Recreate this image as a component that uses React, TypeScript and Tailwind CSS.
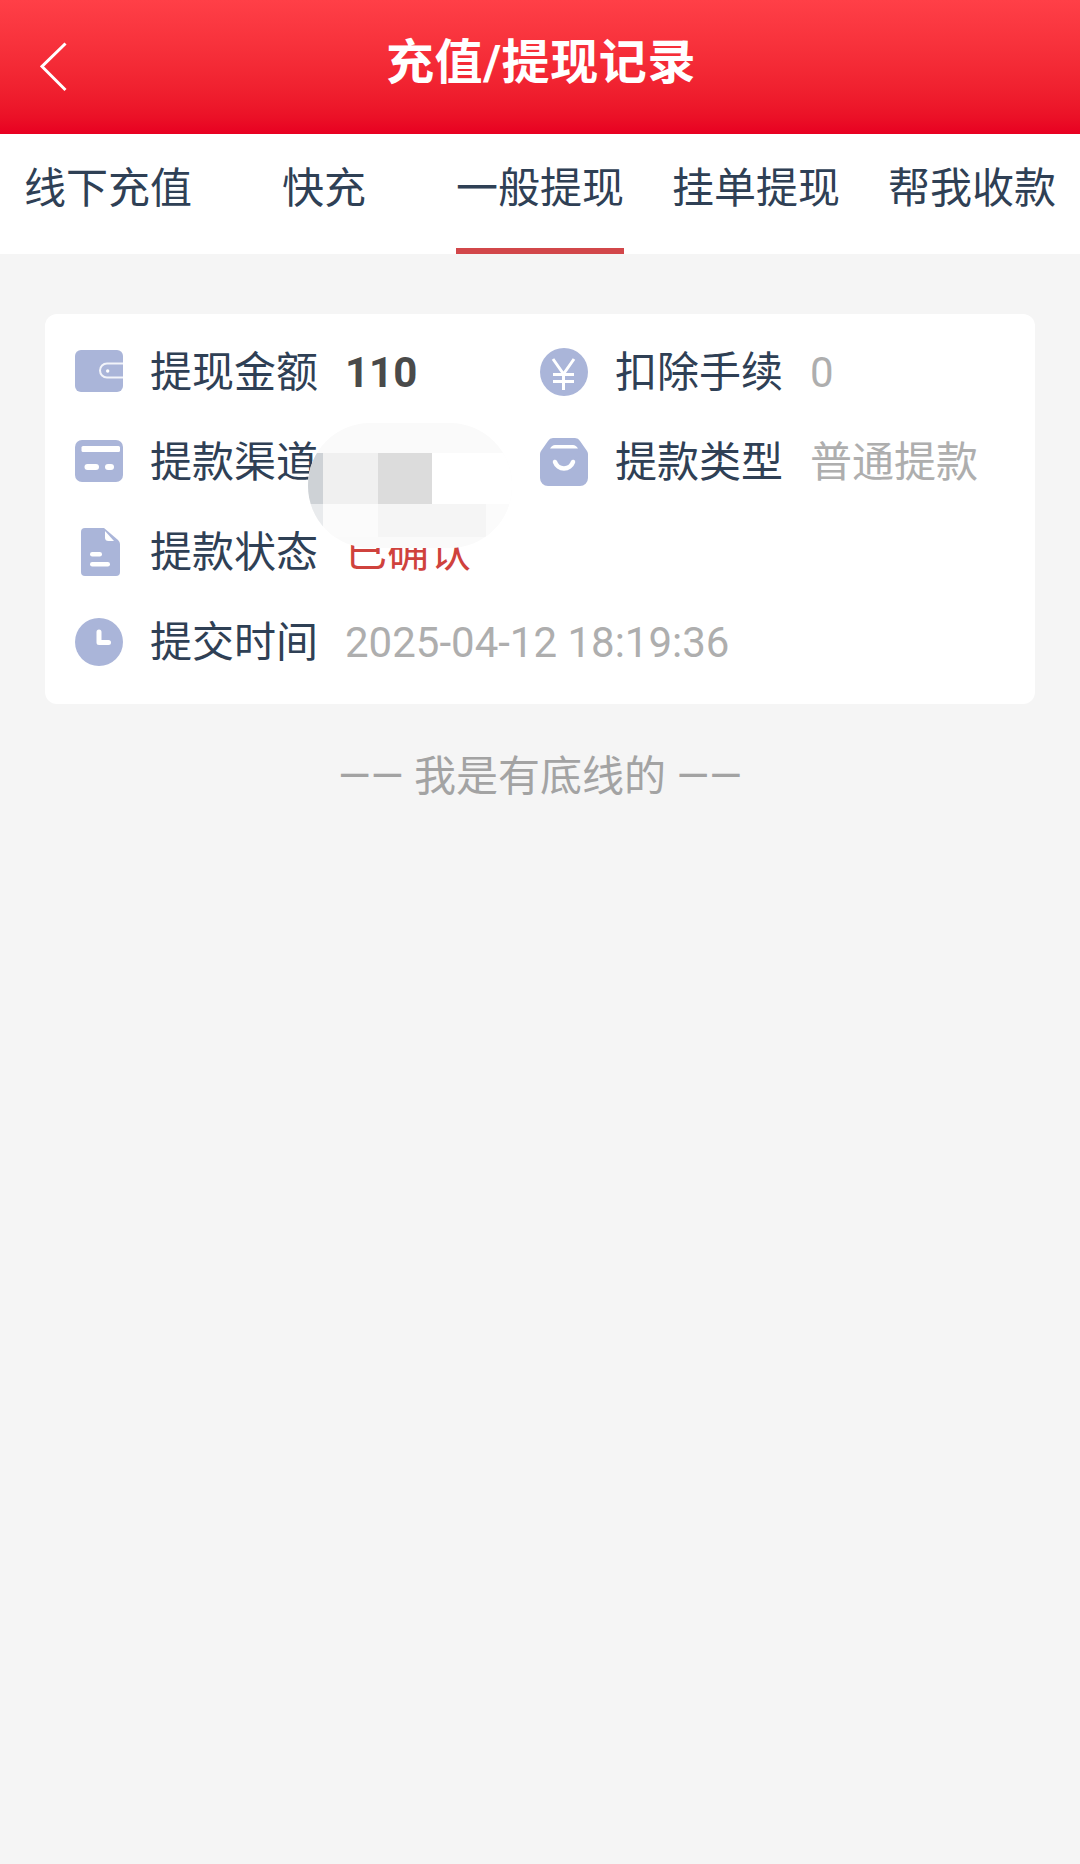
const FONT = "font-['Roboto','Noto_Sans_CJK_SC',sans-serif]";
const C = "#aab5d9";

function Wallet() {
  return (
    <svg width="48" height="48" viewBox="0 0 48 48">
      <rect x="0" y="2" width="48" height="42" rx="6" fill={C} />
      <path d="M48 15.5H32a7 7 0 0 0 0 14h16" fill="none" stroke="#fff" strokeWidth="2" opacity="0.85" />
      <circle cx="32.7" cy="23" r="1.7" fill="#fff" />
    </svg>
  );
}
function CardIcon() {
  return (
    <svg width="48" height="48" viewBox="0 0 48 48">
      <rect x="0" y="2" width="48" height="42" rx="7" fill={C} />
      <rect x="6.5" y="8" width="38.5" height="6" rx="1.5" fill="#fff" />
      <rect x="9.5" y="26" width="14.5" height="6" rx="3" fill="#fff" />
      <rect x="30" y="26" width="9" height="6" rx="3" fill="#fff" />
    </svg>
  );
}
function DocIcon() {
  return (
    <svg width="48" height="48" viewBox="0 0 48 48">
      <path d="M10 0H29L43 12q2 2 2 4V44a4 4 0 0 1-4 4H10a4 4 0 0 1-4-4V4a4 4 0 0 1 4-4z" fill={C} />
      <path d="M30 3L39 13H33.5a3.5 3.5 0 0 1-3.5-3.5z" fill="#fff" />
      <rect x="15" y="24" width="12" height="4.5" rx="2.2" fill="#fff" />
      <rect x="15" y="34" width="20" height="4.5" rx="2.2" fill="#fff" />
    </svg>
  );
}
function Clock() {
  return (
    <svg width="48" height="48" viewBox="0 0 48 48">
      <circle cx="24" cy="24" r="24" fill={C} />
      <path d="M24 14v10.5h9.5" fill="none" stroke="#fff" strokeWidth="5" strokeLinejoin="round" strokeLinecap="round" />
    </svg>
  );
}
function Yen() {
  return (
    <svg width="48" height="48" viewBox="0 0 48 48">
      <circle cx="24" cy="24" r="24" fill={C} />
      <path d="M13 11l10.5 15L34 11M23.5 26v16M13 26.5h21M13 33.5h21" fill="none" stroke="#fff" strokeWidth="3" />
    </svg>
  );
}
function Bag() {
  return (
    <svg width="48" height="48" viewBox="0 0 48 48">
      <path d="M13 0h22a6 6 0 0 1 5 3l7 10a6 6 0 0 1 1 3v24a8 8 0 0 1-8 8H8a8 8 0 0 1-8-8V16a6 6 0 0 1 1-3L8 3a6 6 0 0 1 5-3z" fill={C} />
      <path d="M10 10.5q2-3.5 5-3.5h18q3 0 5 3.5z" fill="#fff" />
      <path d="M15 24a9.5 9.5 0 0 0 18 0" fill="none" stroke="#fff" strokeWidth="4.5" strokeLinecap="round" />
    </svg>
  );
}

function Row({ icon, label, children }: { icon: React.ReactNode; label: string; children?: React.ReactNode }) {
  return (
    <div className="flex h-[90px] items-center">
      <div className="h-12 w-12 shrink-0">{icon}</div>
      <div className="ml-[27px] w-[167px] shrink-0 whitespace-nowrap pt-[1px] text-[#2f4055]">{label}</div>
      <div className="ml-7 whitespace-nowrap pt-[1px] text-[#aeaeae]">{children}</div>
    </div>
  );
}

const tabs = ["线下充值", "快充", "一般提现", "挂单提现", "帮我收款"];

export default function App() {
  return (
    <div className={`${FONT} h-[1864px] w-[1080px] overflow-hidden bg-[#f5f5f5] relative`}>
      <header className="relative flex h-[134px] items-center justify-center bg-gradient-to-b from-[#ff3f47] to-[#e80021]">
        <svg className="absolute left-[40px] top-[42px]" width="28" height="50" viewBox="0 0 28 50">
          <path d="M25.5 1.5L2 24.5 25.5 48" fill="none" stroke="#fff" strokeWidth="3" />
        </svg>
        <h1 className="ml-[2px] text-[48px] font-bold leading-none tracking-[0.6px] text-white -mt-[8px]">充值/提现记录</h1>
      </header>

      <nav className="flex h-[120px] bg-white">
        {tabs.map((t, i) => (
          <div key={t} className="relative flex w-[216px] items-center justify-center pb-[10px] text-[42px] leading-none text-[#2f4055]">
            {t}
            {i === 2 && <span className="absolute bottom-0 left-[24px] h-[6px] w-[168px] bg-[#d2474a]" />}
          </div>
        ))}
      </nav>

      <section className="mx-[45px] mt-[60px] grid h-[390px] w-[990px] grid-cols-[465px_1fr] content-start rounded-xl bg-white pl-[30px] pt-[13px] text-[42px] leading-none">
        <Row icon={<Wallet />} label="提现金额"><span className="font-bold text-[#4a4a4a]">110</span></Row>
        <Row icon={<Yen />} label="扣除手续">0</Row>
        <Row icon={<CardIcon />} label="提款渠道" />
        <Row icon={<Bag />} label="提款类型">普通提款</Row>
        <Row icon={<DocIcon />} label="提款状态"><span className="text-[#cf423d]">已确认</span></Row>
        <div />
        <Row icon={<Clock />} label="提交时间">2025-04-12 18:19:36</Row>
      </section>

      <p className="mt-[52px] text-center text-[42px] leading-none text-[#a3a3a3]">—— 我是有底线的 ——</p>

      <div className="absolute left-[308px] top-[423px] grid h-[125px] w-[204px] grid-cols-[15px_55px_54px_54px_26px] grid-rows-[30px_51px_33px_11px] overflow-hidden rounded-[62px] bg-[#fafafa]">
        <div className="col-span-5" />
        <div className="bg-[#ced2d6]" />
        <div className="bg-[#f0f0f0]" />
        <div className="bg-[#dcdcdc]" />
        <div className="col-span-2 bg-white" />
        <div className="bg-[#e9ebed]" />
        <div className="bg-[#fbfbfb]" />
        <div className="col-span-2 bg-[#f5f5f5]" />
        <div className="bg-[#fbfbfb]" />
      </div>
    </div>
  );
}
